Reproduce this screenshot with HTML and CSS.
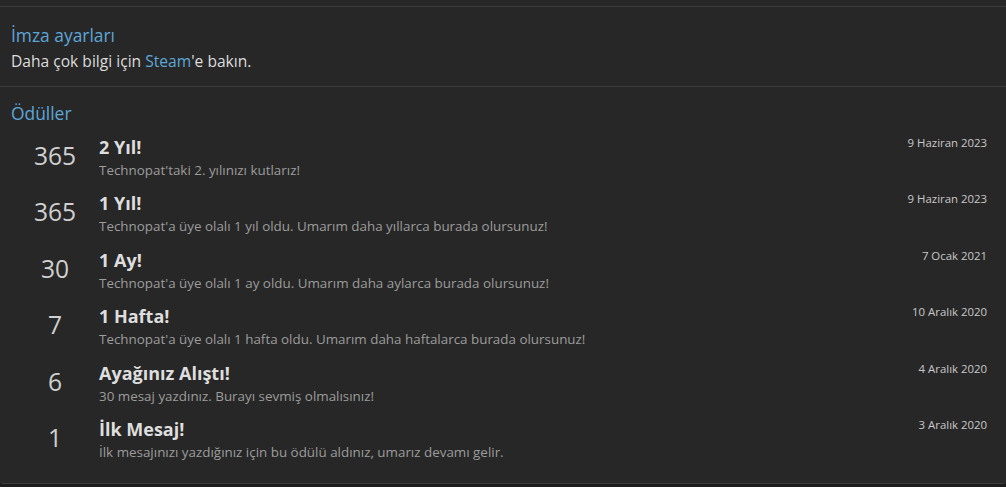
FILE: index.html
```html
<!DOCTYPE html>
<html lang="tr">
<head>
<meta charset="utf-8">
<link rel="stylesheet" href="styles.css">
</head>
<body>
<div class="block">
  <div class="section sig">
    <h3 class="heading">İmza ayarları</h3>
    <p class="text">Daha çok bilgi için <a class="link" href="#">Steam</a>'e bakın.</p>
  </div>
  <div class="section awards">
    <h3 class="heading">Ödüller</h3>
    <ol class="list">
      <li class="row">
        <div class="num">365</div>
        <div class="main">
          <div class="title">2 Yıl!</div>
          <div class="desc">Technopat'taki 2. yılınızı kutlarız!</div>
        </div>
        <div class="date">9 Haziran 2023</div>
      </li>
      <li class="row">
        <div class="num">365</div>
        <div class="main">
          <div class="title">1 Yıl!</div>
          <div class="desc">Technopat'a üye olalı 1 yıl oldu. Umarım daha yıllarca burada olursunuz!</div>
        </div>
        <div class="date">9 Haziran 2023</div>
      </li>
      <li class="row">
        <div class="num">30</div>
        <div class="main">
          <div class="title">1 Ay!</div>
          <div class="desc">Technopat'a üye olalı 1 ay oldu. Umarım daha aylarca burada olursunuz!</div>
        </div>
        <div class="date">7 Ocak 2021</div>
      </li>
      <li class="row">
        <div class="num">7</div>
        <div class="main">
          <div class="title">1 Hafta!</div>
          <div class="desc">Technopat'a üye olalı 1 hafta oldu. Umarım daha haftalarca burada olursunuz!</div>
        </div>
        <div class="date">10 Aralık 2020</div>
      </li>
      <li class="row">
        <div class="num">6</div>
        <div class="main">
          <div class="title">Ayağınız Alıştı!</div>
          <div class="desc">30 mesaj yazdınız. Burayı sevmiş olmalısınız!</div>
        </div>
        <div class="date">4 Aralık 2020</div>
      </li>
      <li class="row">
        <div class="num">1</div>
        <div class="main">
          <div class="title">İlk Mesaj!</div>
          <div class="desc">İlk mesajınızı yazdığınız için bu ödülü aldınız, umarız devamı gelir.</div>
        </div>
        <div class="date">3 Aralık 2020</div>
      </li>
    </ol>
  </div>
</div>
</body>
</html>
```

FILE: styles.css
```css
html, body {
  margin: 0;
  padding: 0;
  background: #1c1c1c;
  height: 487px;
  overflow: hidden;
}
body {
  font-family: "Open Sans", "Noto Sans", sans-serif;
  color: #dcdcdc;
}
.block {
  background: #272727;
  padding-top: 6px;
  border-bottom: 1px solid #3c3c3c;
  border-radius: 0 0 4px 4px;
}
.section {
  border-top: 1px solid #3c3c3c;
  padding: 0 19px 0 11px;
}
.sig {
  padding-top: 16px;
  padding-bottom: 14px;
}
.heading {
  margin: 0;
  font-size: 17.4px;
  line-height: 24px;
  font-weight: 400;
  color: #5ea6d8;
}
.text {
  margin: 3px 0 0;
  font-size: 15.6px;
  line-height: 22px;
  color: #dcdcdc;
}
.link {
  color: #5ea6d8;
  text-decoration: none;
}
.awards {
  padding-top: 14px;
  padding-bottom: 15px;
}
.list {
  list-style: none;
  margin: 0;
  padding: 5px 0 0;
}
.row {
  display: flex;
  align-items: flex-start;
  height: 56.4px;
  box-sizing: border-box;
  padding-top: 6px;
}
.num {
  width: 88px;
  flex: none;
  text-align: center;
  font-size: 24.6px;
  line-height: 30px;
  margin-top: 5px;
  color: #d0d0d0;
}
.main {
  flex: 1;
  min-width: 0;
}
.title {
  font-size: 18px;
  line-height: 22px;
  font-weight: 700;
  color: #dedede;
}
.desc {
  margin-top: 2px;
  font-size: 13.4px;
  line-height: 20px;
  color: #9c9c9c;
}
.date {
  flex: none;
  font-size: 11.4px;
  line-height: 14px;
  color: #c8c8c8;
}
```
